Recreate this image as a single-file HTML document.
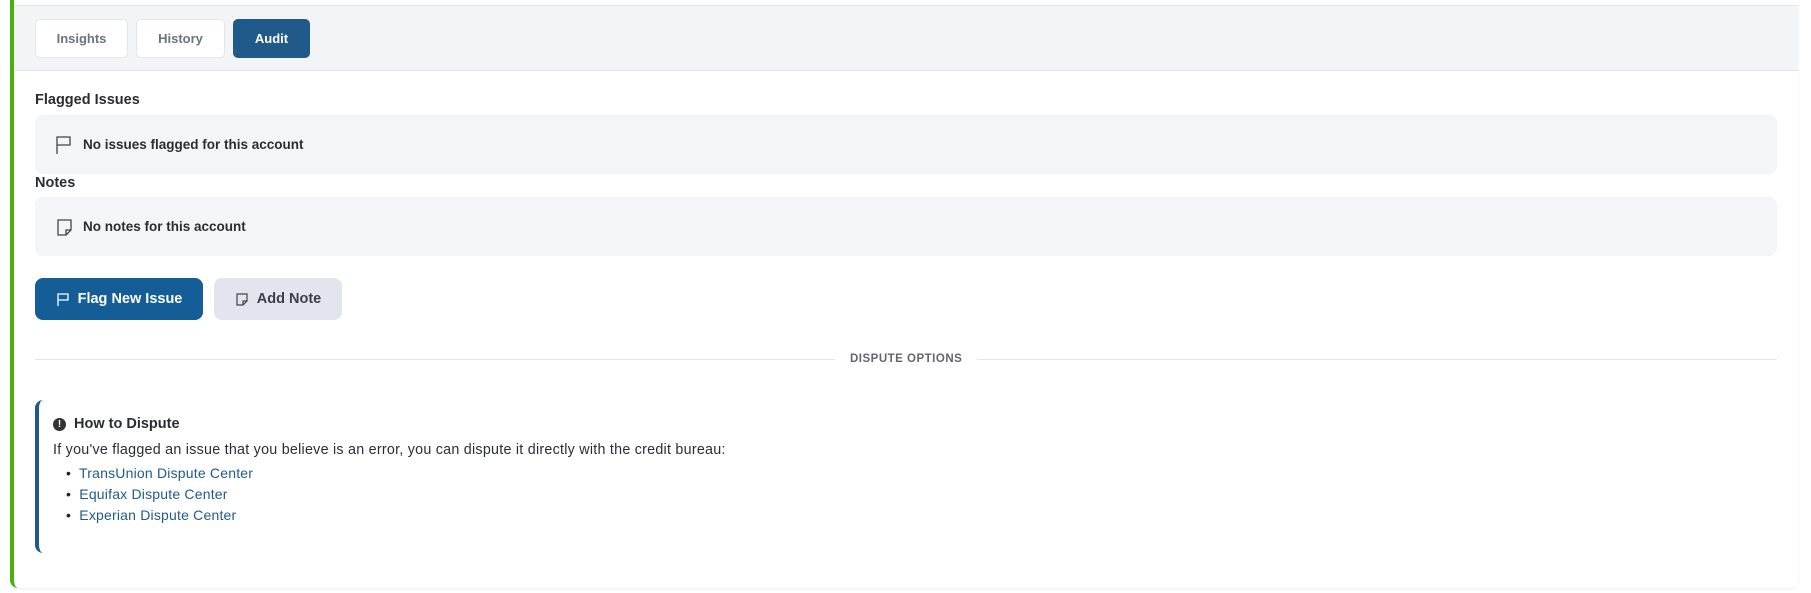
<!DOCTYPE html>
<html><head><meta charset="utf-8"><style>
*{box-sizing:border-box;margin:0;padding:0}
body{width:1811px;height:593px;background:#fff;font-family:"Liberation Sans",sans-serif;color:#1f2328;position:relative;overflow:hidden}
.card{position:absolute;left:10px;top:-10px;width:1788px;height:598px;background:#fff;border-left:4px solid #4caf10;border-radius:0 0 8px 8px;box-shadow:0 1px 3px rgba(0,0,0,.08)}
.topline{position:absolute;left:14px;top:5px;width:1784px;height:1px;background:#e2e5e9}
.hdr{position:absolute;left:14px;top:6px;width:1784px;height:65px;background:#f3f4f6;border-bottom:1px solid #dde1e6}
.tab{position:absolute;top:19px;height:39px;border:1px solid #e3e6ea;border-radius:5px;background:#fff;color:#6b7280;font-weight:bold;font-size:13px;display:flex;align-items:center;justify-content:center}
.tab.on{background:#1f5a8a;border-color:#1f5a8a;color:#fff}
.lbl{position:absolute;left:35px;font-size:14.5px;font-weight:bold;color:#2a2e33}
.box{position:absolute;left:35px;width:1742px;height:59px;background:#f4f5f7;border-radius:8px;display:flex;align-items:center;padding-left:20px;font-size:13.5px;font-weight:bold;color:#2a2e33}
.box svg{margin-right:10px}
.btn{position:absolute;top:278px;height:42px;border-radius:8px;display:flex;align-items:center;justify-content:center;font-weight:bold;font-size:14.5px}
.div{position:absolute;top:359px;height:1px;background:#e3e5e8}
.info{position:absolute;left:35px;top:400px;width:500px;height:153px;border-left:4px solid #1f5a8a;border-radius:8px 0 0 8px}
a{color:#1f5a8a;text-decoration:none}
</style></head><body>
<div class="card"></div>
<div class="topline"></div>
<div class="hdr"></div>
<div class="tab" style="left:35px;width:93px">Insights</div>
<div class="tab" style="left:136px;width:89px">History</div>
<div class="tab on" style="left:233px;width:77px">Audit</div>

<div class="lbl" style="top:92px">Flagged Issues</div>
<div class="box" style="top:115px"><svg width="18" height="20" viewBox="0 0 18 20" fill="none" stroke="#444" stroke-width="1.3"><path d="M2 19V2h13v8H2"/></svg>No issues flagged for this account</div>
<div class="lbl" style="top:175px">Notes</div>
<div class="box" style="top:197px"><svg width="18" height="20" viewBox="0 0 18 20" fill="none" stroke="#444" stroke-width="1.3"><path d="M3 3h13v10l-5 5H3z M16 13h-5v5"/></svg>No notes for this account</div>

<div class="btn" style="left:35px;width:168px;background:#155d96;color:#fff"><svg width="14" height="15" viewBox="0 0 14 15" fill="none" stroke="#fff" stroke-width="1.3" style="margin-right:8px"><path d="M2 14V2h10v6H2"/></svg>Flag New Issue</div>
<div class="btn" style="left:214px;width:128px;background:#e2e5ee;color:#3a3f48"><svg width="14" height="15" viewBox="0 0 14 15" fill="none" stroke="#444" stroke-width="1.2" style="margin-right:8px"><path d="M2 2h10v7l-4 4H2z M12 9H8v4"/></svg>Add Note</div>

<div class="div" style="left:35px;width:800px"></div>
<div class="div" style="left:977px;width:800px"></div>
<div style="position:absolute;left:850px;top:353px;font-size:11.5px;font-weight:bold;color:#5f6670;letter-spacing:.5px">DISPUTE OPTIONS</div>

<div class="info"></div>
<div style="position:absolute;left:53px;top:416px;font-size:14.5px;font-weight:bold;color:#2a2e33;display:flex;align-items:center"><span style="display:inline-block;width:13px;height:13px;border-radius:50%;background:#333;color:#fff;font-size:10px;text-align:center;line-height:13px;margin-right:8px">!</span>How to Dispute</div>
<div style="position:absolute;left:53px;top:442px;font-size:14.3px;letter-spacing:.25px;color:#2a2e33">If you've flagged an issue that you believe is an error, you can dispute it directly with the credit bureau:</div>
<div style="position:absolute;left:66px;top:463px;font-size:14px;line-height:21px;letter-spacing:.2px">
<div>•&nbsp; <a>TransUnion Dispute Center</a></div>
<div>•&nbsp; <a>Equifax Dispute Center</a></div>
<div>•&nbsp; <a>Experian Dispute Center</a></div>
</div>
</body></html>
